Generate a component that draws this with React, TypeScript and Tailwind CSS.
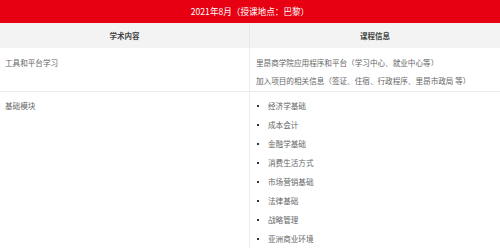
import React from 'react';

const basics = [
  '经济学基础',
  '成本会计',
  '金融学基础',
  '消费生活方式',
  '市场营销基础',
  '法律基础',
  '战略管理',
  '亚洲商业环境',
];

const toolLines = [
  '里昂商学院应用程序和平台（学习中心、就业中心等）',
  '加入项目的相关信息（签证、住宿、行政程序、里昂市政局 等）',
];

const App: React.FC = () => {
  return (
    <div
      className="w-[500px] h-[248px] overflow-hidden bg-white text-[#666]"
      style={{ fontFamily: '"Noto Sans CJK SC", "Noto Sans", sans-serif' }}
    >
      <div className="h-[23px] bg-[#e60012] text-white text-[8.6px] flex items-center justify-center">
        2021年8月（授课地点：巴黎）
      </div>

      <div className="grid grid-cols-2 h-[25px] bg-[#f3f3f3] text-[#444] text-[7.5px] font-bold">
        <div className="flex items-center justify-center border-r border-[#e8e8e8]">学术内容</div>
        <div className="flex items-center justify-center">课程信息</div>
      </div>

      <div className="grid grid-cols-2 h-[44px] border-b border-[#ececec] text-[7.6px]">
        <div className="pl-[5px] pt-[6px] leading-[18px] border-r border-[#ececec]">工具和平台学习</div>
        <div className="pl-[6px] pt-[6px] leading-[18px]">
          {toolLines.map((line) => (
            <p key={line}>{line}</p>
          ))}
        </div>
      </div>

      <div className="grid grid-cols-2 text-[7.6px]">
        <div className="pl-[5px] pt-[4px] leading-[19px] border-r border-[#ececec]">基础模块</div>
        <ul className="pl-[6px] pt-[4px] leading-[19px]">
          {basics.map((item) => (
            <li key={item} className="flex items-center">
              <span className="w-[2px] h-[2px] bg-[#333] ml-[1px] mr-[9px]" />
              {item}
            </li>
          ))}
        </ul>
      </div>
    </div>
  );
};

export default App;
